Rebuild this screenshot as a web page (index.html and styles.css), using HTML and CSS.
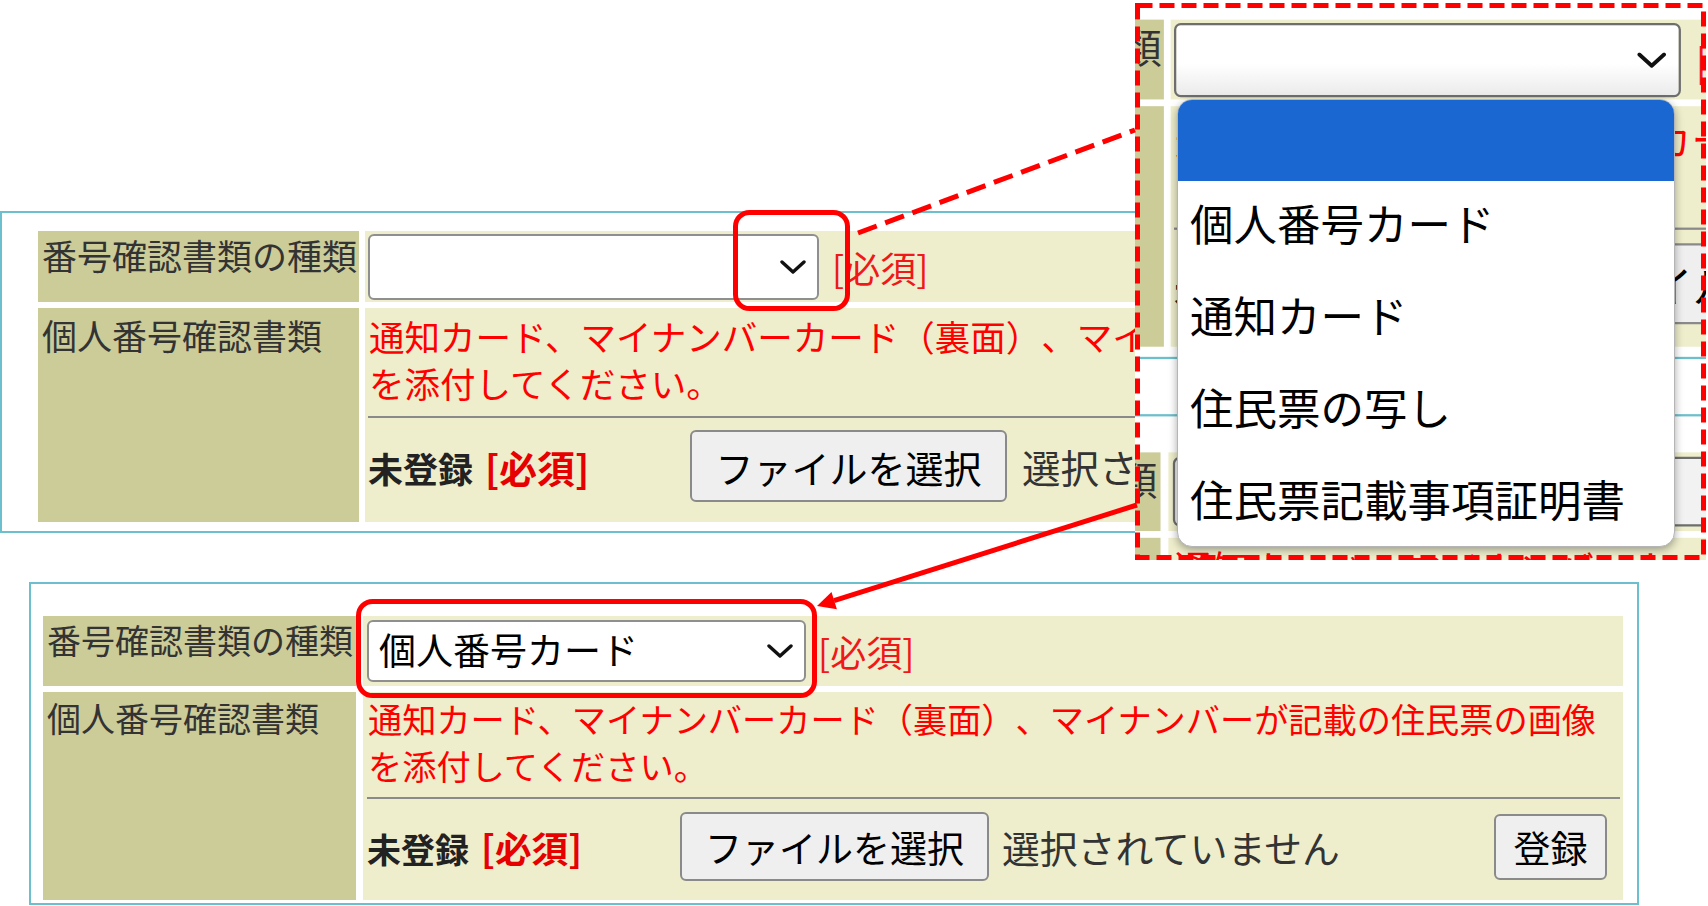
FILE: index.html
```html
<!DOCTYPE html>
<html lang="ja">
<head>
<meta charset="utf-8">
<title>番号確認書類の種類</title>
<link rel="stylesheet" href="styles.css">
</head>
<body>
<div class="canvas">

  <div class="panel p1">
    <div class="grid">
      <div class="lab r1">番号確認書類の種類</div>
      <div class="val r1">
        <div class="sel"><span class="sel-text"></span><svg class="chev" viewBox="0 0 26 14"><polyline points="2,2 13,12 24,2"/></svg></div>
        <span class="req">[必須]</span>
      </div>
      <div class="lab r2">個人番号確認書類</div>
      <div class="val r2">
        <p class="msg">通知カード、マイナンバーカード（裏面）、マイナンバーが記載の住民票の画像<br>を添付してください。</p>
        <div class="sep"></div>
        <div class="upload">
          <span class="status">未登録<span class="rq">[必須]</span></span>
          <span class="btn filebtn">ファイルを選択</span>
          <span class="nofile">選択されていません</span>
          <span class="btn regbtn">登録</span>
        </div>
      </div>
    </div>
  </div>

  <div class="panel p2">
    <div class="grid">
      <div class="lab r1">番号確認書類の種類</div>
      <div class="val r1">
        <div class="sel"><span class="sel-text">個人番号カード</span><svg class="chev" viewBox="0 0 26 14"><polyline points="2,2 13,12 24,2"/></svg></div>
        <span class="req">[必須]</span>
      </div>
      <div class="lab r2">個人番号確認書類</div>
      <div class="val r2">
        <p class="msg">通知カード、マイナンバーカード（裏面）、マイナンバーが記載の住民票の画像<br>を添付してください。</p>
        <div class="sep"></div>
        <div class="upload">
          <span class="status">未登録<span class="rq">[必須]</span></span>
          <span class="btn filebtn">ファイルを選択</span>
          <span class="nofile">選択されていません</span>
          <span class="btn regbtn">登録</span>
        </div>
      </div>
    </div>
  </div>

  <div class="callout">
    <div class="world">
      <div class="panel p1">
        <div class="grid">
          <div class="lab r1">番号確認書類の種類</div>
          <div class="val r1">
            <div class="sel"><span class="sel-text"></span><svg class="chev" viewBox="0 0 26 14"><polyline points="2,2 13,12 24,2"/></svg></div>
            <span class="req">[必須]</span>
          </div>
          <div class="lab r2">個人番号確認書類</div>
          <div class="val r2">
            <p class="msg">通知カード、マイナンバーカード（裏面）、マイナンバーが記載の住民票の画像<br>を添付してください。</p>
            <div class="sep"></div>
            <div class="upload">
              <span class="status">未登録<span class="rq">[必須]</span></span>
              <span class="btn filebtn">ファイルを選択</span>
              <span class="nofile">選択されていません</span>
              <span class="btn regbtn">登録</span>
            </div>
          </div>
        </div>
      </div>
      <div class="panel p2">
        <div class="grid">
          <div class="lab r1">番号確認書類の種類</div>
          <div class="val r1">
            <div class="sel"><span class="sel-text"></span><svg class="chev" viewBox="0 0 26 14"><polyline points="2,2 13,12 24,2"/></svg></div>
            <span class="req">[必須]</span>
          </div>
          <div class="lab r2">個人番号確認書類</div>
          <div class="val r2">
            <p class="msg">通知カード、マイナンバーカード（裏面）、マイナンバーが記載の住民票の画像<br>を添付してください。</p>
            <div class="sep"></div>
            <div class="upload">
              <span class="status">未登録<span class="rq">[必須]</span></span>
              <span class="btn filebtn">ファイルを選択</span>
              <span class="nofile">選択されていません</span>
              <span class="btn regbtn">登録</span>
            </div>
          </div>
        </div>
      </div>
    </div>
    <ul class="dropdown">
      <li class="opt blank"></li>
      <li class="opt">個人番号カード</li>
      <li class="opt">通知カード</li>
      <li class="opt">住民票の写し</li>
      <li class="opt">住民票記載事項証明書</li>
    </ul>
  </div>

  <svg class="overlay" width="1708" height="906" viewBox="0 0 1708 906">
    <line class="dash-line" x1="858" y1="233" x2="1135" y2="130"/>
    <rect class="dash-box" x="1137.5" y="5.5" width="566" height="552"/>
    <rect class="hl" x="735.5" y="212.5" width="112" height="96" rx="14"/>
    <rect class="hl" x="358.5" y="601.5" width="456" height="94" rx="14"/>
    <line class="arrow-line" x1="1137" y1="505" x2="834" y2="600.6"/>
    <polygon class="arrow-head" points="817,606 836.9,609.2 831.5,592"/>
  </svg>
</div>
</body>
</html>
```

FILE: styles.css
```css
* { box-sizing: border-box; }

body {
  margin: 0;
  background: #fff;
  font-family: "Noto Sans CJK JP", "Noto Sans", sans-serif;
  text-spacing-trim: space-all;
}

.canvas {
  position: relative;
  width: 1708px;
  height: 906px;
  overflow: hidden;
  background: #fff;
}

/* ---------- form panels ---------- */
.panel {
  position: absolute;
  border: 2px solid #6cbfcc;
  background: #fff;
}
.p1 { left: 0; top: 211px; width: 1672px; padding: 18px 14px 9px 36px; }
.p2 { left: 29px; top: 582px; width: 1610px; padding: 32px 14px 3px 12px; }

.grid { display: grid; }
.p1 .grid { grid-template-columns: 321px 1fr; grid-template-rows: 71px 214px; gap: 6px; }
.p2 .grid { grid-template-columns: 313px 1fr; grid-template-rows: 70px 208px; column-gap: 7px; row-gap: 6px; }

.lab {
  background: #cccc99;
  color: #333;
  padding-left: 4px;
  white-space: nowrap;
}
.p1 .lab { font-size: 35px; line-height: 48px; }
.p1 .lab.r2 { padding-top: 3px; }
.p2 .lab { font-size: 34px; line-height: 47px; }
.p2 .lab.r2 { padding-top: 2px; }

.val { background: #eeeecc; }
.val.r1 { display: flex; align-items: center; }
.val.r2 { display: flex; flex-direction: column; }
.p1 .val { padding-left: 3px; padding-right: 3px; }
.p2 .val { padding-left: 4px; padding-right: 3px; }
.p1 .val.r2 { padding-top: 4px; }
.p2 .val.r2 { padding-top: 3px; }

.sel {
  display: flex;
  align-items: center;
  justify-content: space-between;
  background: #fff;
  border: 2px solid #8f8f8f;
  border-radius: 6px;
  color: #000;
  flex: none;
}
.p1 .sel { width: 451px; height: 66px; padding: 0 11px 0 11px; font-size: 38px; }
.p2 .sel { width: 439px; height: 62px; padding: 0 11px 4px 10px; font-size: 37px; }
.p2 .sel .chev { margin-top: 4px; }

.chev { width: 26px; height: 14px; }
.chev polyline { fill: none; stroke: #111; stroke-width: 3.4; stroke-linecap: round; stroke-linejoin: round; }

.req { color: #f01818; font-size: 36px; line-height: 1; }
.p1 .req { margin-left: 13px; }
.p2 .req { margin-left: 12px; }

.msg { margin: 0; color: #f00; line-height: 47px; white-space: nowrap; padding-left: 1px; }
.p1 .msg { font-size: 35.5px; }
.p2 .msg { font-size: 34.2px; }

.sep { height: 0; border-top: 2px solid #8a8a8a; }
.p1 .sep { margin-top: 10px; }
.p2 .sep { margin-top: 8px; }

.upload { flex: 1; display: flex; align-items: center; }
.p1 .upload { padding-bottom: 8px; }
.p2 .upload { padding-bottom: 6px; }

.status { flex: none; font-weight: 700; color: #222; white-space: nowrap; }
.p1 .status { width: 322px; font-size: 35px; }
.p2 .status { width: 313px; font-size: 34px; }
.status .rq { color: #e60000; margin-left: 12px; font-size: 1.08em; }

.btn {
  display: flex;
  align-items: center;
  justify-content: center;
  background: #efefef;
  border: 2px solid #8a8a8a;
  border-radius: 6px;
  color: #000;
  flex: none;
  white-space: nowrap;
}
.p1 .filebtn { width: 317px; height: 72px; font-size: 38px; }
.p2 .filebtn { width: 309px; height: 69px; font-size: 37px; }

.nofile { color: #333; white-space: nowrap; }
.p1 .nofile { margin-left: 15px; font-size: 38.5px; }
.p2 .nofile { margin-left: 13px; font-size: 37.8px; }

.regbtn { margin-left: auto; }
.p1 .regbtn { width: 117px; height: 69px; font-size: 38px; margin-right: 13px; }
.p2 .regbtn { width: 113px; height: 66px; font-size: 37px; margin-right: 13px; }

/* ---------- magnified callout ---------- */
.callout {
  position: absolute;
  left: 1135px;
  top: 3px;
  width: 571px;
  height: 557px;
  overflow: hidden;
  background: #fff;
}
.world {
  position: absolute;
  left: 0;
  top: 0;
  width: 1708px;
  height: 906px;
  transform-origin: 0 0;
  transform: scale(1.124) translate(-333.3px, -216.2px);
}
.callout .sel {
  background: linear-gradient(#fff 55%, #ebebeb);
  border-color: #6e6e6e;
}
.callout .p2 .sel { width: 540px; background: #f2f2f2; }

.dropdown {
  position: absolute;
  left: 42px;
  top: 96px;
  width: 498px;
  height: 448px;
  margin: 0;
  padding: 0;
  list-style: none;
  background: #fff;
  border: 1px solid #b5b5b5;
  border-radius: 15px;
  overflow: hidden;
  box-shadow: 0 3px 8px rgba(0, 0, 0, 0.35);
}
.opt {
  height: 92px;
  display: flex;
  align-items: center;
  padding-left: 12px;
  padding-bottom: 9px;
  font-size: 43.5px;
  color: #000;
  white-space: nowrap;
}
.opt.blank { height: 81px; background: #1a67d2; }

/* ---------- annotations ---------- */
.overlay {
  position: absolute;
  left: 0;
  top: 0;
  pointer-events: none;
}
.dash-line { stroke: #f00; stroke-width: 5; stroke-dasharray: 20 9; }
.dash-box { fill: none; stroke: #f00; stroke-width: 5; stroke-dasharray: 15 7; }
.hl { fill: none; stroke: #f00; stroke-width: 5; }
.arrow-line { stroke: #f00; stroke-width: 5; }
.arrow-head { fill: #f00; }
```
